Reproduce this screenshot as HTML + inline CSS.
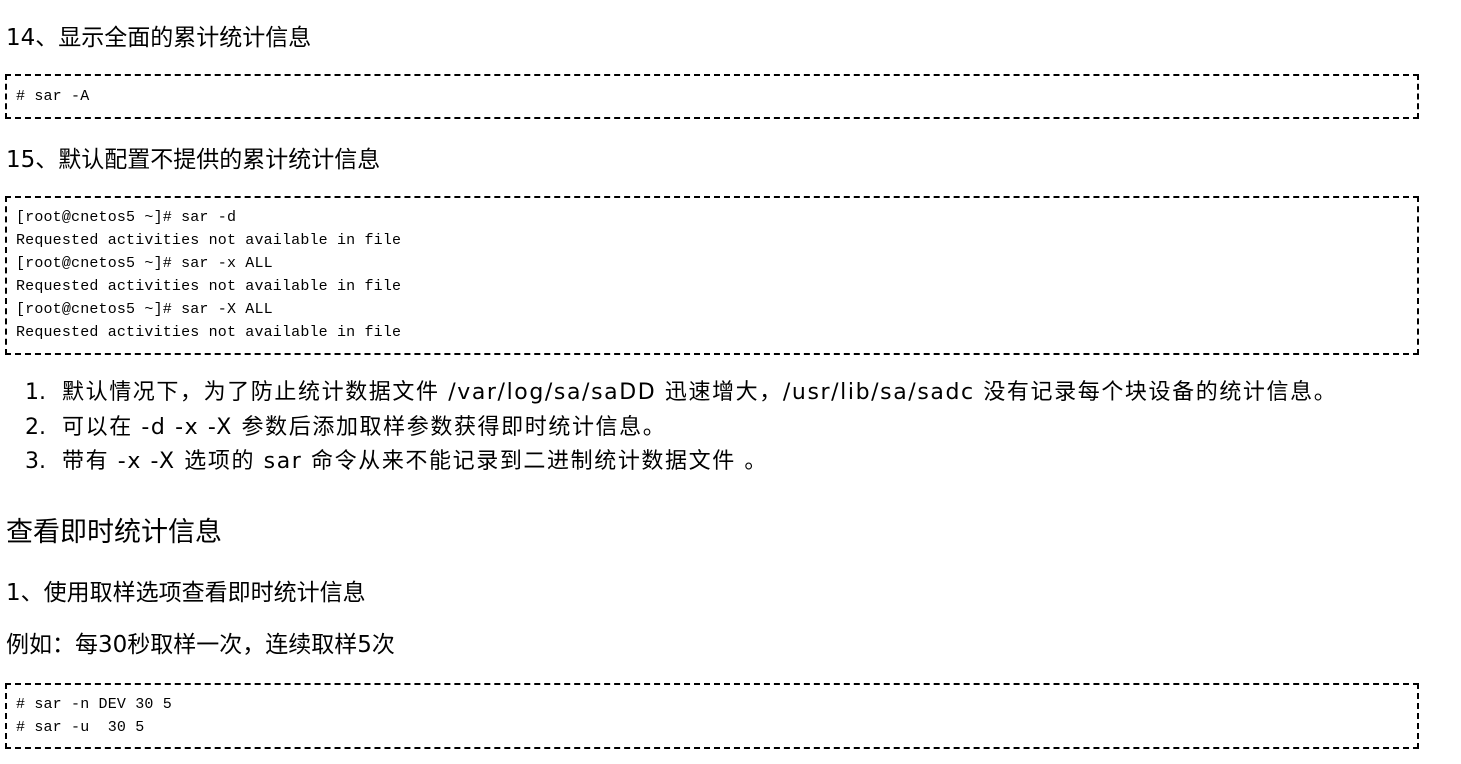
<!DOCTYPE html>
<html><head><meta charset="utf-8"><style>
body{margin:0;width:1461px;height:764px;background:#fff;color:#000;font-family:"DejaVu Sans","Liberation Sans","Noto Sans CJK SC",sans-serif;overflow:hidden;position:relative}
.t{position:absolute;left:6px;font-size:23px;line-height:24px;white-space:nowrap}
.box{position:absolute;left:5px;width:1414px;border:2px dashed #000;font-family:"Liberation Mono","Noto Serif CJK SC",monospace;font-size:15px;letter-spacing:0.17px;line-height:23px;padding:0 0 0 9px;box-sizing:border-box;white-space:pre}
.li{position:absolute;font-size:22px;line-height:24px;white-space:nowrap;left:0;width:1461px}
.n{position:absolute;left:25px}
</style></head><body>
<div class="t" style="top:26px">14、显示全面的累计统计信息</div>
<div class="box" style="top:74px;height:45px;padding-top:9px"># sar -A</div>
<div class="t" style="top:148px">15、默认配置不提供的累计统计信息</div>
<div class="box" style="top:196px;height:159px;padding-top:8px">[root@cnetos5 ~]# sar -d
Requested activities not available in file
[root@cnetos5 ~]# sar -x ALL
Requested activities not available in file
[root@cnetos5 ~]# sar -X ALL
Requested activities not available in file</div>
<div class="li" style="top:381px"><span class="n">1.</span><span style="position:absolute;left:62px;letter-spacing:1.6px">默认情况下，为了防止统计数据文件 /var/log/sa/saDD 迅速增大，/usr/lib/sa/sadc 没有记录每个块设备的统计信息。</span></div>
<div class="li" style="top:416px"><span class="n">2.</span><span style="position:absolute;left:62px;letter-spacing:1.6px">可以在 -d -x -X 参数后添加取样参数获得即时统计信息。</span></div>
<div class="li" style="top:450px"><span class="n">3.</span><span style="position:absolute;left:62px;letter-spacing:1.6px">带有 -x -X 选项的 sar 命令从来不能记录到二进制统计数据文件 。</span></div>
<div class="t" style="top:517px;font-size:27px;line-height:32px">查看即时统计信息</div>
<div class="t" style="top:581px">1、使用取样选项查看即时统计信息</div>
<div class="t" style="top:633px">例如：每30秒取样一次，连续取样5次</div>
<div class="box" style="top:683px;height:66px;padding-top:8px"># sar -n DEV 30 5
# sar -u  30 5</div>
</body></html>
